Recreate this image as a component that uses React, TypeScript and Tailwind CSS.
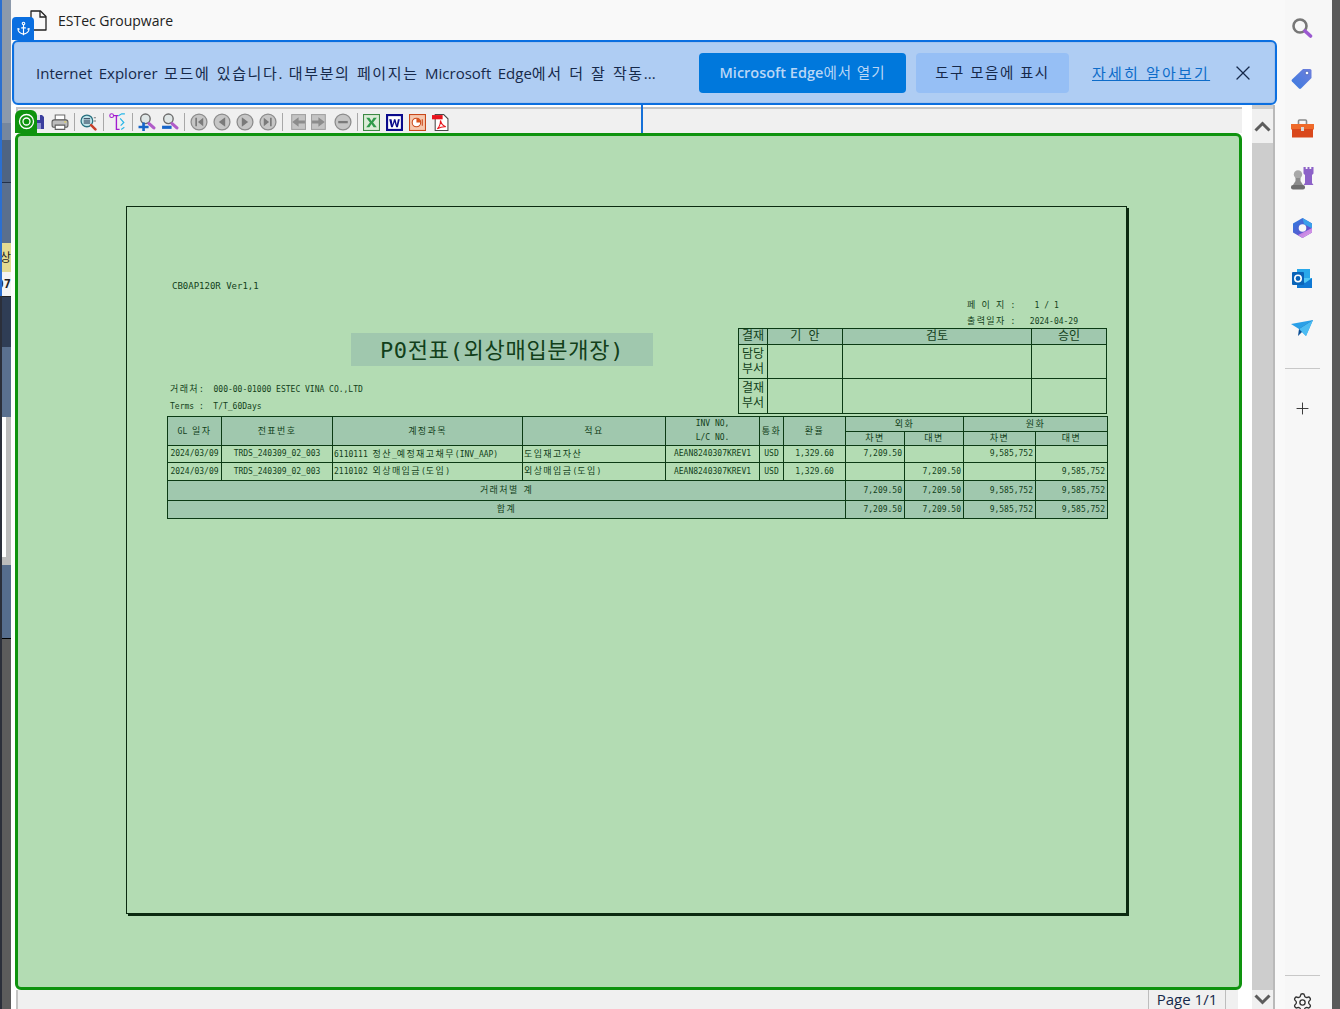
import type { ReactNode } from "react";
import { Anchor, Plus, Settings, X } from "lucide-react";

const mono = "font-['DejaVu_Sans_Mono','Noto_Sans_CJK_KR',monospace]";
const ui = "font-['Open_Sans','Noto_Sans_CJK_KR',sans-serif]";
const cell = "border border-[#0b3a14] p-0 align-middle text-center whitespace-pre";
const head = cell + " bg-[#a0c8ae]";
const num = cell + " text-right pr-[2px]";

// the report font has double-width hangul, so hangul runs get their own size
function ko(text: string): ReactNode {
  return text.split(/([가-힣]+)/).map((part, i) =>
    /[가-힣]/.test(part) ? (
      <span key={i} className="text-[9px] tracking-[1.4px]">{part}</span>
    ) : (
      part
    )
  );
}

function wide(text: string): ReactNode {
  return text.split(/([가-힣]+)/).map((part, i) =>
    /[가-힣]/.test(part) ? (
      <span key={i} className="tracking-[1.600px]">{part}</span>
    ) : (
      part
    )
  );
}

function Disc({ d }: { d: string }) {
  return (
    <svg width="18" height="18" viewBox="0 0 17 17">
      <circle cx="8.5" cy="8.5" r="7.5" fill="#c6c6c6" stroke="#8c8c8c" strokeWidth="1.2" />
      <path d={d} fill="#7a7a7a" />
    </svg>
  );
}

function PageArrow({ flip }: { flip?: boolean }) {
  return (
    <svg width="18" height="18" viewBox="0 0 17 17">
      <rect x={flip ? 0.5 : 3.5} y="1.5" width="13" height="14" fill="#c4c4c4" stroke="#a0a0a0" />
      <path d={flip ? "M7 4l6 4.5-6 4.5v-3H1V7h6z" : "M10 4L4 8.5l6 4.5v-3h6V7h-6z"} fill="#8c8c8c" />
    </svg>
  );
}

function Lens({ minus }: { minus?: boolean }) {
  return (
    <svg width="18" height="18" viewBox="0 0 17 17">
      <circle cx="7" cy="5.5" r="4.5" fill="#dfe6e6" stroke="#6b6b6b" strokeWidth="1.3" />
      <path d="M10.5 10l4.5 4" stroke="#b05cc8" strokeWidth="3" strokeLinecap="round" />
      {minus ? (
        <path d="M1 12h9v3H1z" fill="#1665c9" />
      ) : (
        <path d="M4 9h2.5v3H10v2.4H6.5V17H4v-2.6H.5V12H4z" fill="#1665c9" />
      )}
    </svg>
  );
}

function ToolIcons() {
  const sep = <div className="flex w-[6px] justify-center"><div className="h-[18px] w-px bg-[#a8a8a8]" /></div>;
  const slot = "flex w-[23px] shrink-0 items-center justify-center";
  return (
    <div className="flex h-full items-center pl-[7px] pt-[2px]">
      <div className={slot}>
        <svg width="16" height="16" viewBox="0 0 16 16">
          <path d="M1 1h12l2 2v12H1z" fill="#3b3f9e" />
          <path d="M4 1h7v5H4z" fill="#d9d9ef" />
          <path d="M4 9h8v6H4z" fill="#8f92cf" />
        </svg>
      </div>
      <div className={slot}>
        <svg width="18" height="17" viewBox="0 0 17 16">
          <path d="M4 1h9v5H4z" fill="#fff" stroke="#6b6b6b" />
          <rect x="1" y="5.5" width="15" height="7" rx="2" fill="#bdbdbd" stroke="#5e5e5e" />
          <path d="M4 10.5h9v4H4z" fill="#fff" stroke="#5e5e5e" />
          <path d="M12.5 7.5h2" stroke="#e4d24a" />
        </svg>
      </div>
      {sep}
      <div className={slot}>
        <svg width="17" height="17" viewBox="0 0 16 16">
          <circle cx="6.5" cy="6.5" r="5.5" fill="#bfe4ea" stroke="#28707f" strokeWidth="1.2" />
          <path d="M3.5 4.5h6M3.5 6.5h6M3.5 8.5h6" stroke="#1f2a44" />
          <path d="M13 3.5h2M13 6.5h2" stroke="#777" />
          <path d="M10.5 10.5l4 4" stroke="#c8402a" strokeWidth="2.4" strokeLinecap="round" />
        </svg>
      </div>
      {sep}
      <div className={slot}>
        <svg width="18" height="18" viewBox="0 0 17 17" fill="none">
          <circle cx="2.5" cy="2.5" r="1.8" stroke="#a21ccf" />
          <path d="M4.5 2.5H9M7 2.500v13h3" stroke="#a21ccf" strokeWidth="1.3" />
          <path d="M9 2.500L12 .8h3M10.500 5L14 9l-3 3M11.500 15.500l3-2" stroke="#27b6e8" strokeWidth="1.1" />
        </svg>
      </div>
      {sep}
      <div className={slot}><Lens /></div>
      <div className={slot}><Lens minus /></div>
      {sep}
      <div className={slot}><Disc d="M5 4.5h1.6v8H5zM12.5 4.5v8l-5-4z" /></div>
      <div className={slot}><Disc d="M11.5 4v9l-6-4.500z" /></div>
      <div className={slot}><Disc d="M5.500 4v9l6-4.500z" /></div>
      <div className={slot}><Disc d="M12 4.500h-1.600v8H12zM4.500 4.500v8l5-4z" /></div>
      {sep}
      <div className={slot}><PageArrow /></div>
      <div className={slot}><PageArrow flip /></div>
      <div className={slot}><Disc d="M4 7.500h9v2.200H4z" /></div>
      {sep}
      <div className={slot}>
        <svg width="17" height="17" viewBox="0 0 16 16">
          <rect x=".5" y=".5" width="15" height="15" fill="#dcecd8" stroke="#3d8a44" />
          <path d="M3 3.500h3l2 3 2-3h3l-3.500 4.500L13 12.500h-3l-2-3-2 3H3l3.500-4.500z" fill="#2f9a4a" />
        </svg>
      </div>
      <div className={slot}>
        <svg width="17" height="17" viewBox="0 0 16 16">
          <rect x="1" y="1" width="14" height="14" fill="#fff" stroke="#0a0a8c" strokeWidth="2" />
          <path d="M3 5h2.200l1 5 1.300-5h1.400l1.300 5 1-5H13l-1.800 7.500H9.600L8 7.500 6.400 12.500H4.800z" fill="#0a0a8c" />
        </svg>
      </div>
      <div className={slot}>
        <svg width="17" height="17" viewBox="0 0 16 16">
          <rect x=".5" y=".5" width="15" height="15" fill="#f6c8ae" stroke="#c8481a" />
          <circle cx="7" cy="8" r="4" fill="#fff" stroke="#c8481a" />
          <path d="M7 8V4a4 4 0 0 1 4 4z" fill="#d8531c" />
          <path d="M12.500 5v6" stroke="#c8481a" />
        </svg>
      </div>
      <div className={slot}>
        <svg width="17" height="17" viewBox="0 0 16 16">
          <path d="M3 .5h8L15 4.500V15.500H3z" fill="#fff" stroke="#4a4a4a" />
          <path d="M0 1h10v4H0z" fill="#e8141c" />
          <path d="M5 14c2-2 3-5 3-8 .5 3 2 5 5 6-3-.3-5 .2-8 2z" fill="none" stroke="#e8141c" />
        </svg>
      </div>
    </div>
  );
}

function Sidebar() {
  const slot = "flex h-[50px] w-full shrink-0 items-center justify-center";
  return (
    <aside className="flex h-full w-[47px] shrink-0 flex-col items-center bg-[#f7f7f7] pr-[13px] pt-[3px]">
      <div className={slot}>
        <svg width="22" height="22" viewBox="0 0 22 22" fill="none">
          <circle cx="9" cy="9" r="6.500" stroke="#777" strokeWidth="2.600" />
          <path d="M14 14l5.500 5" stroke="#9b59d0" strokeWidth="3.600" strokeLinecap="round" />
        </svg>
      </div>
      <div className={slot}>
        <svg width="22" height="22" viewBox="0 0 22 22">
          <defs>
            <linearGradient id="tagFill" x1="0" y1="1" x2="1" y2="0">
              <stop offset="0" stopColor="#3a7be0" />
              <stop offset="1" stopColor="#6f7fdc" />
            </linearGradient>
          </defs>
          <path d="M12 2h7a1.500 1.500 0 0 1 1.500 1.500V11L10 21.500a1.500 1.500 0 0 1-2 0L1 14.500a1.500 1.500 0 0 1 0-2z" fill="url(#tagFill)" />
          <circle cx="16" cy="6" r="1.800" fill="#fff" stroke="#2f4fa8" strokeWidth=".6" />
        </svg>
      </div>
      <div className={slot}>
        <svg width="23" height="19" viewBox="0 0 23 19">
          <path d="M7.500 5V2a1 1 0 0 1 1-1h6a1 1 0 0 1 1 1v3" fill="none" stroke="#8a8a8a" strokeWidth="1.600" />
          <path d="M0 5h23v5.500H0z" fill="#ef6a2a" />
          <path d="M1 10h21v8.500H1z" fill="#d9481c" />
          <rect x="10" y="8" width="3" height="4" fill="#d8d8d8" />
        </svg>
      </div>
      <div className={slot}>
        <svg width="23" height="23" viewBox="0 0 23 23">
          <path d="M12.500 0h2.200v2h1.800V0h2v2h1.800V0h2.200v6.500l-1.500 1.500v8l1.500 2H12.500l1.500-2V8l-1.500-1.500z" fill="#8d62c8" />
          <circle cx="7" cy="7.500" r="4.200" fill="#a8a8a8" />
          <path d="M4.500 11h5v3l2.500 4H2l2.500-4z" fill="#8c8c8c" />
          <rect x="0" y="18" width="14" height="4.500" rx="2" fill="#6e6e6e" />
        </svg>
      </div>
      <div className={slot}>
        <svg width="21" height="22" viewBox="0 0 21 22">
          <defs>
            <linearGradient id="cpA" x1="0" y1="0" x2="1" y2="1">
              <stop offset="0" stopColor="#2b7fe0" />
              <stop offset="1" stopColor="#7a3fc4" />
            </linearGradient>
            <linearGradient id="cpB" x1="0" y1="0" x2="1" y2="1">
              <stop offset="0" stopColor="#b068e0" />
              <stop offset="1" stopColor="#e0a8e8" />
            </linearGradient>
          </defs>
          <path d="M10.500 1L20 6.500v9L10.500 21 1 15.500v-9z" fill="url(#cpA)" />
          <path d="M10.500 1L20 6.500v5L12 7z" fill="#3aa0ea" />
          <path d="M20 11v4.500L10.500 21 6 18l8-4z" fill="url(#cpB)" />
          <circle cx="10.500" cy="11" r="3.800" fill="#f7f7f7" />
        </svg>
      </div>
      <div className={slot}>
        <svg width="21" height="21" viewBox="0 0 21 21">
          <path d="M5 1h13v9H5z" fill="#28a8ea" />
          <path d="M5 10h15v10H5z" fill="#0f78d4" />
          <path d="M20 10l-7 5-8-5z" fill="#50c8f5" />
          <rect x="0" y="4" width="12" height="13" rx="1" fill="#0a64b8" />
          <circle cx="6" cy="10.500" r="3.200" fill="none" stroke="#fff" strokeWidth="1.600" />
        </svg>
      </div>
      <div className={slot}>
        <svg width="22" height="17" viewBox="0 0 22 17">
          <path d="M0 4L22 0 15 16 8 9z" fill="#2aa0e8" />
          <path d="M22 0L8 9l-1 7 4-4z" fill="#0c4f96" />
          <path d="M8 9l7 7 7-16z" fill="#4cbcf2" />
        </svg>
      </div>
      <div className="mt-[15px] h-px w-[35px] shrink-0 bg-[#c8c8c8]" />
      <div className="mt-[29px] flex h-[20px] shrink-0 items-center justify-center">
        <Plus size={19} strokeWidth={1.200} className="text-[#333]" />
      </div>
      <div className="mt-auto h-px w-[35px] shrink-0 bg-[#c8c8c8]" />
      <div className="mt-[16px] -mb-[4px] shrink-0">
        <Settings size={21} strokeWidth={1.500} className="text-[#333]" />
      </div>
    </aside>
  );
}

function LeftStrip() {
  return (
    <div className={`${mono} flex h-full w-[11px] shrink-0 flex-col overflow-hidden`}>
      <div className="flex shrink-0 flex-col border-l-2 border-[#2b6fd0]">
        <div className="h-[123px] bg-[#8c99ab]" />
        <div className="h-[17px] bg-[#76879e]" />
        <div className="h-[43px] border-b border-[#23314a] bg-[#4f6482]" />
        <div className="h-[60px] bg-[#5a6f8d]" />
        <div className="flex h-[29px] items-center justify-end overflow-hidden bg-[#e3da92] text-[12px] leading-none text-[#222]">
          <span className="shrink-0">상</span>
        </div>
        <div className="flex h-[24px] items-center justify-end overflow-hidden bg-[#f4f4f4] text-[12px] font-bold leading-none text-[#222]">
          <span className="shrink-0">07</span>
        </div>
      </div>
      <div className="flex min-h-0 flex-1 flex-col border-l-2 border-[#2b2f3a]">
        <div className="h-[51px] border-t border-[#222] bg-[#2f3d55]" />
        <div className="h-[70px] bg-[#5a708f]" />
        <div className="flex h-[148px] bg-[#bcbcbc]">
          <div className="h-[140px] w-[4px] bg-white" />
        </div>
        <div className="h-[74px] border-b border-black bg-[#566d8d]" />
        <div className="flex-1 bg-[#5c5c5c]" />
      </div>
    </div>
  );
}

function ApprovalTable() {
  return (
    <table className="w-[369px] table-fixed border-collapse text-[12px] leading-[15px]">
      <colgroup>
        <col className="w-[29px]" />
        <col className="w-[75px]" />
        <col className="w-[189px]" />
        <col className="w-[75px]" />
      </colgroup>
      <tbody>
        <tr className="h-[16px]">
          <td className={head}>결재</td>
          <td className={head}>기 안</td>
          <td className={head}>검토</td>
          <td className={head}>승인</td>
        </tr>
        <tr className="h-[34px]">
          <td className={cell}>담당<br />부서</td>
          <td className={cell} />
          <td className={cell} />
          <td className={cell} />
        </tr>
        <tr className="h-[35px]">
          <td className={cell}>결재<br />부서</td>
          <td className={cell} />
          <td className={cell} />
          <td className={cell} />
        </tr>
      </tbody>
    </table>
  );
}

const ledgerRows = [
  { account: "6110111 정산_예정재고채무(INV_AAP)", memo: "도입재고자산", fd: "7,209.50", fc: "", wd: "9,585,752", wc: "" },
  { account: "2110102 외상매입금(도입)", memo: "외상매입금(도입)", fd: "", fc: "7,209.50", wd: "", wc: "9,585,752" },
];

function LedgerTable() {
  return (
    <table className="mt-[2px] w-[941px] table-fixed border-collapse text-[8px] leading-[10px]">
      <colgroup>
        <col className="w-[54px]" />
        <col className="w-[111px]" />
        <col className="w-[190px]" />
        <col className="w-[143px]" />
        <col className="w-[94px]" />
        <col className="w-[24px]" />
        <col className="w-[62px]" />
        <col className="w-[59px]" />
        <col className="w-[59px]" />
        <col className="w-[72px]" />
        <col className="w-[72px]" />
      </colgroup>
      <tbody>
        <tr className="h-[15px]">
          <td rowSpan={2} className={head}>{ko("GL 일자")}</td>
          <td rowSpan={2} className={head}>{ko("전표번호")}</td>
          <td rowSpan={2} className={head}>{ko("계정과목")}</td>
          <td rowSpan={2} className={head}>{ko("적요")}</td>
          <td rowSpan={2} className={head + " leading-[14px]"}>INV NO,<br />L/C NO.</td>
          <td rowSpan={2} className={head}>{ko("통화")}</td>
          <td rowSpan={2} className={head}>{ko("환율")}</td>
          <td colSpan={2} className={head}>{ko("외화")}</td>
          <td colSpan={2} className={head}>{ko("원화")}</td>
        </tr>
        <tr className="h-[14px]">
          <td className={head}>{ko("차변")}</td>
          <td className={head}>{ko("대변")}</td>
          <td className={head}>{ko("차변")}</td>
          <td className={head}>{ko("대변")}</td>
        </tr>
        {ledgerRows.map((row, i) => (
          <tr key={row.account} className={i === 0 ? "h-[17px]" : "h-[18px]"}>
            <td className={cell}>2024/03/09</td>
            <td className={cell}>TRDS_240309_02_003</td>
            <td className={cell + " !text-left pl-px"}>{ko(row.account)}</td>
            <td className={cell + " !text-left pl-px"}>{ko(row.memo)}</td>
            <td className={cell}>AEAN8240307KREV1</td>
            <td className={cell}>USD</td>
            <td className={cell}>1,329.60</td>
            <td className={num}>{row.fd}</td>
            <td className={num}>{row.fc}</td>
            <td className={num}>{row.wd}</td>
            <td className={num}>{row.wc}</td>
          </tr>
        ))}
        {["거래처별 계", "합계"].map((label, i) => (
          <tr key={label} className={i === 0 ? "h-[20px]" : "h-[18px]"}>
            <td colSpan={7} className={head}>{ko(label)}</td>
            <td className={num + " bg-[#a0c8ae]"}>7,209.50</td>
            <td className={num + " bg-[#a0c8ae]"}>7,209.50</td>
            <td className={num + " bg-[#a0c8ae]"}>9,585,752</td>
            <td className={num + " bg-[#a0c8ae]"}>9,585,752</td>
          </tr>
        ))}
      </tbody>
    </table>
  );
}

function ReportPage() {
  return (
    <div className={`${mono} h-[708px] w-[1001px] shrink-0 border border-[#0b2a10] pl-[40px] text-[#123f1a] shadow-[2px_2px_0_#0b2a10]`}>
      <div className="flex pt-[72px]">
        <div className="w-[571px] shrink-0">
          <div className="ml-[5px] h-[14px] text-[9px] leading-[14px]">CB0AP120R Ver1,1</div>
          <div className="ml-[184px] mt-[40px] flex h-[33px] w-[302px] items-center justify-center bg-[#a0c8ae] pt-[2px] text-[22px] leading-none tracking-[0.700px]">
            P0전표(외상매입분개장)
          </div>
          <div className="ml-[3px] mt-[16px] h-[14px] whitespace-pre text-[8px] leading-[14px]">{ko("거래처:  000-00-01000 ESTEC VINA CO.,LTD")}</div>
          <div className="ml-[3px] mt-[4px] h-[14px] whitespace-pre text-[8px] leading-[14px]">Terms :  T/T_60Days</div>
        </div>
        <div className="w-[369px] shrink-0">
          <div className="ml-[229px] mt-[19px] h-[14px] whitespace-pre text-[8px] leading-[14px]">{ko("페 이 지 :    1 / 1")}</div>
          <div className="ml-[229px] mt-[2px] h-[14px] whitespace-pre text-[8px] leading-[14px]">{ko("출력일자 :   2024-04-29")}</div>
          <ApprovalTable />
        </div>
      </div>
      <LedgerTable />
    </div>
  );
}

export default function App() {
  return (
    <div className={`${ui} relative flex h-[1009px] w-[1340px] overflow-hidden bg-[#f9f9f9]`}>
      <LeftStrip />

      <main className="flex h-full min-w-0 flex-1 flex-col">
        <header className="relative flex h-[40px] shrink-0 items-center pl-[19px]">
          <svg width="17" height="21" viewBox="0 0 17 21" fill="none" stroke="#222" strokeWidth="1.300">
            <path d="M1 1h9.500L16 6.500V20H1z" strokeLinejoin="round" />
            <path d="M10 1v6h6" />
          </svg>
          <span className="ml-[11px] text-[14px] text-[#222]">ESTec Groupware</span>
        </header>

        <section className="ml-px flex h-[65px] w-[1265px] shrink-0 items-center rounded-[6px] border-2 border-[#0b6fe0] bg-[#afcdf3] pl-[22px] pt-px shadow-[inset_0_0_0_1px_#a4c3ec]">
          <span className="w-[663px] shrink-0 whitespace-nowrap text-[15px] text-[#16294a] [word-spacing:2.600px]">
            {wide("Internet Explorer 모드에 있습니다. 대부분의 페이지는 Microsoft Edge에서 더 잘 작동...")}
          </span>
          <button className="flex h-[40px] w-[207px] shrink-0 items-center justify-center rounded-[4px] bg-[#0078dc] text-[14.500px] text-[#b9d6f6]">
            <span className="font-semibold">Microsoft Edge</span>
            <span className="tracking-[1px]">에서 열기</span>
          </button>
          <button className="ml-[10px] flex h-[40px] w-[153px] shrink-0 items-center justify-center rounded-[4px] bg-[#96bff5] text-[14.500px] tracking-[1.500px] text-[#16294a]">
            도구 모음에 표시
          </button>
          <a className="ml-[23px] w-[118px] shrink-0 whitespace-nowrap text-[15px] tracking-[2.200px] text-[#0d6cc9] underline">자세히 알아보기</a>
          <X size={24} strokeWidth={1.300} className="ml-[21px] text-[#16294a]" />
        </section>

        <div className="relative mr-[10px] flex min-h-0 flex-1 bg-white pl-[4px]">
          <div className="flex h-full w-[1227px] shrink-0 flex-col">
            <div className="relative ml-px mt-[2px] h-[26px] shrink-0 border-l-2 border-t-2 border-[#c4c4c4] bg-[#f0f0f0]">
              <ToolIcons />
              <div className="absolute left-[623px] top-[-4px] h-[28px] w-[2px] bg-[#1570d8]" />
            </div>
            <div className="h-[857px] shrink-0 rounded-[6px] border-[3px] border-[#0e930e] bg-[#b3dcb3] pl-[108px] pt-[70px]">
              <ReportPage />
            </div>
            <div className="ml-px mr-[4px] flex min-h-0 flex-1 justify-end border-l-2 border-[#c4c4c4] bg-[#f0f0f0] pr-[12px]">
              <div className="flex w-[78px] items-center justify-center border-x border-[#bdbdbd] pb-px text-[15px] leading-none text-[#16294a]">
                Page 1/1
              </div>
            </div>
          </div>
          <div className="w-[10px] shrink-0" />
          <div className="flex h-full w-[21px] shrink-0 flex-col bg-[#cdcdcd] pt-[4px]">
            <div className="flex h-[34px] shrink-0 items-center justify-center bg-[#f0f0f0]">
              <svg width="17" height="11" viewBox="0 0 17 11" fill="none">
                <path d="M1.500 9.500l7-7 7 7" stroke="#5c5c5c" strokeWidth="3" />
              </svg>
            </div>
            <div className="flex-1" />
            <div className="flex h-[19px] shrink-0 items-center justify-center bg-[#f0f0f0]">
              <svg width="17" height="11" viewBox="0 0 17 11" fill="none">
                <path d="M1.500 1.500l7 7 7-7" stroke="#5c5c5c" strokeWidth="3" />
              </svg>
            </div>
          </div>
          <div className="w-[2px] shrink-0 bg-[#b9b9b9]" />
        </div>
      </main>

      <Sidebar />
      <div className="h-full w-[8px] shrink-0 bg-[#5a5a5a]" />

      <div className="absolute left-[12px] top-[17px] flex h-[23px] w-[22px] items-center justify-center rounded-t-[4px] bg-[#0b6fe0]">
        <Anchor size={15} strokeWidth={1.800} className="text-white" />
      </div>
      <div className="absolute left-[15px] top-[110px] flex h-[23px] w-[22px] items-center justify-center rounded-t-[6px] bg-[#0e930e]">
        <svg width="17" height="17" viewBox="0 0 17 17" fill="none" stroke="#fff" strokeWidth="1.300">
          <circle cx="8.500" cy="8.500" r="7" />
          <circle cx="8.500" cy="8.500" r="3.500" />
        </svg>
      </div>
    </div>
  );
}
